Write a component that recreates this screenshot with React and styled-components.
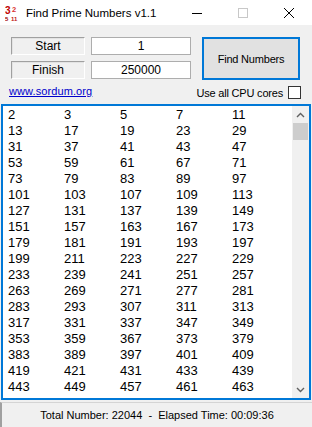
import React from "react";
import styled, { createGlobalStyle } from "styled-components";

const Global = createGlobalStyle`
  html, body {
    margin: 0;
    padding: 0;
    background: #f0f0f0;
  }
  body {
    font-family: "Liberation Sans", Arial, sans-serif;
    color: #000;
  }
`;

const Window = styled.div`
  width: 312px;
  height: 427px;
  display: flex;
  flex-direction: column;
  background: #f0f0f0;
  overflow: hidden;
`;

const TitleBar = styled.div`
  height: 25px;
  background: #fff;
  display: flex;
  align-items: center;
  padding-left: 5px;
`;

const AppIcon = styled.svg`
  width: 16px;
  height: 16px;
  margin-right: 5px;
`;

const Title = styled.div`
  font-size: 11.5px;
  flex: 1;
`;

const Ctl = styled.div`
  width: 46px;
  height: 25px;
  display: flex;
  align-items: center;
  justify-content: center;
`;

const Body = styled.div`
  flex: 1;
  display: flex;
  flex-direction: column;
  padding-top: 12px;
`;

const Top = styled.div`
  display: flex;
  padding-left: 11px;
`;

const Fields = styled.div`
  display: grid;
  grid-template-columns: 74px 100px;
  grid-auto-rows: 18px;
  column-gap: 6px;
  row-gap: 6px;
`;

const Label = styled.div`
  border-top: 1px solid #a0a0a0;
  border-left: 1px solid #a0a0a0;
  border-right: 1px solid #fff;
  border-bottom: 1px solid #fff;
  box-shadow: inset 1px 1px 0 #e3e3e3;
  display: flex;
  align-items: center;
  justify-content: center;
  font-size: 12px;
`;

const Field = styled.div`
  background: #fff;
  border: 1px solid #adadad;
  display: flex;
  align-items: center;
  justify-content: center;
  font-size: 12px;
`;

const FindButton = styled.div`
  margin-left: 11px;
  width: 98px;
  height: 43px;
  box-sizing: border-box;
  border: 2px solid #0078d7;
  background: #e1e1e1;
  display: flex;
  align-items: center;
  justify-content: center;
  font-size: 11px;
  letter-spacing: -0.2px;
`;

const LinkRow = styled.div`
  height: 24px;
  display: flex;
  align-items: center;
  justify-content: space-between;
  padding: 0 11px 0 9px;
`;

const SiteLink = styled.a`
  color: #0000cc;
  text-decoration: underline;
  font-size: 11px;
  letter-spacing: 0.1px;
  margin-top: -3px;
`;

const CpuOption = styled.label`
  display: flex;
  align-items: center;
  gap: 5px;
  font-size: 11px;
  letter-spacing: -0.2px;
  margin-top: 1px;
`;

const Check = styled.span`
  width: 11px;
  height: 11px;
  border: 1px solid #333;
  background: #fff;
`;

const ListBox = styled.div`
  margin: 0 1px;
  height: 296px;
  box-sizing: border-box;
  border: 2px solid #0078d7;
  background: #fff;
  display: flex;
  overflow: hidden;
`;

const Grid = styled.div`
  flex: 1;
  padding-top: 1px;
  display: grid;
  grid-template-columns: repeat(5, 56px);
  grid-auto-rows: 16px;
  align-content: start;
`;

const Cell = styled.div`
  padding-left: 5px;
  font-size: 13px;
  line-height: 16px;
`;

const ScrollBar = styled.div`
  width: 17px;
  background: #f0f0f0;
  display: flex;
  flex-direction: column;
`;

const Arrow = styled.div`
  height: 17px;
  display: flex;
  align-items: center;
  justify-content: center;
`;

const Thumb = styled.div`
  height: 17px;
  margin: 0 1px;
  background: #cdcdcd;
`;

const Track = styled.div`
  flex: 1;
`;

const StatusBar = styled.div`
  flex: 1;
  margin-top: 2px;
  border-top: 1px solid #d4d4d4;
  border-left: 2px solid #a0a0a0;
  display: flex;
  align-items: center;
  justify-content: center;
  font-size: 11px;
`;

const primes = (() => {
  const out = [];
  for (let n = 2; out.length < 90; n++) {
    let ok = true;
    for (let d = 2; d * d <= n; d++) if (n % d === 0) { ok = false; break; }
    if (ok) out.push(n);
  }
  return out;
})();

const Chevron = ({ up }) => (
  <svg width="9" height="6" viewBox="0 0 9 6">
    <path
      d={up ? "M1 5 L4.5 1.5 L8 5" : "M1 1 L4.5 4.5 L8 1"}
      fill="none"
      stroke="#606060"
      strokeWidth="1.4"
    />
  </svg>
);

const iconFont = "Liberation Sans, sans-serif";

export default function App() {
  return (
    <Window>
      <Global />
      <TitleBar>
        <AppIcon viewBox="0 0 16 16">
          <text x="0" y="9" fontSize="10" fontWeight="bold" fill="#c00000" fontFamily={iconFont}>3</text>
          <text x="7" y="7" fontSize="7.5" fontWeight="bold" fill="#d83030" fontFamily={iconFont}>2</text>
          <text x="0" y="16" fontSize="6" fontWeight="bold" fill="#a00000" fontFamily={iconFont}>5</text>
          <text x="6" y="16" fontSize="6" fontWeight="bold" fill="#c02020" fontFamily={iconFont}>11</text>
        </AppIcon>
        <Title>Find Prime Numbers v1.1</Title>
        <Ctl>
          <svg width="10" height="10" viewBox="0 0 10 10">
            <path d="M0 5.5 H10" stroke="#000" strokeWidth="1" />
          </svg>
        </Ctl>
        <Ctl>
          <svg width="10" height="10" viewBox="0 0 10 10">
            <rect x="0.5" y="0.5" width="9" height="9" fill="none" stroke="#c8c8c8" />
          </svg>
        </Ctl>
        <Ctl>
          <svg width="10" height="10" viewBox="0 0 10 10">
            <path d="M0 0 L10 10 M10 0 L0 10" stroke="#000" strokeWidth="1" />
          </svg>
        </Ctl>
      </TitleBar>
      <Body>
        <Top>
          <Fields>
            <Label>Start</Label>
            <Field>1</Field>
            <Label>Finish</Label>
            <Field>250000</Field>
          </Fields>
          <FindButton>Find Numbers</FindButton>
        </Top>
        <LinkRow>
          <SiteLink href="#">www.sordum.org</SiteLink>
          <CpuOption>
            Use all CPU cores <Check />
          </CpuOption>
        </LinkRow>
        <ListBox>
          <Grid>
            {primes.map((p) => (
              <Cell key={p}>{p}</Cell>
            ))}
          </Grid>
          <ScrollBar>
            <Arrow>
              <Chevron up />
            </Arrow>
            <Thumb />
            <Track />
            <Arrow>
              <Chevron />
            </Arrow>
          </ScrollBar>
        </ListBox>
        <StatusBar>Total Number: 22044&nbsp; - &nbsp;Elapsed Time: 00:09:36</StatusBar>
      </Body>
    </Window>
  );
}
